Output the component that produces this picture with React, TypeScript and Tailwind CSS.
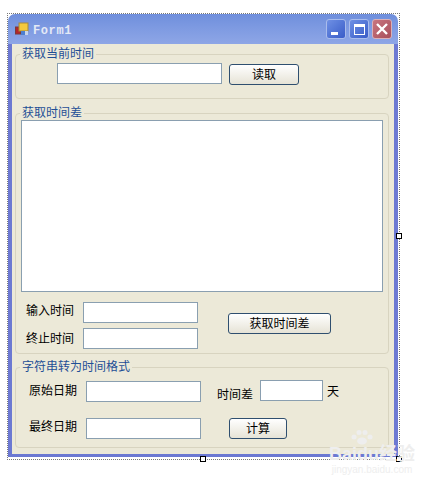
const font = { fontFamily: '"Noto Sans CJK SC", sans-serif' }

function TextBox({ className }: { className: string }) {
  return <div className={`h-[21px] border border-[#8a9fb0] bg-white ${className}`} />
}

function Btn({ label, className }: { label: string; className: string }) {
  return (
    <div className={`flex h-[21px] items-center justify-center rounded-[3px] border border-[#2f4f6f] bg-gradient-to-b from-white to-[#e6e3d6] pb-[2px] text-[12px] text-black ${className}`}>
      {label}
    </div>
  )
}

function Group({ title, className, children }: { title: string; className: string; children: React.ReactNode }) {
  return (
    <div className={`relative ml-[3px] mr-[5px] rounded-[4px] border border-[#d8d4c0] ${className}`}>
      <span className="absolute left-[4px] top-[-9px] bg-[#ece9d8] px-[2px] text-[12px] leading-[14px] text-[#1f4f96]">{title}</span>
      {children}
    </div>
  )
}

function Handle({ className }: { className: string }) {
  return <div className={`absolute h-[6px] w-[6px] border border-black bg-white ${className}`} />
}

export default function App() {
  return (
    <div className="relative h-[487px] w-[444px] overflow-hidden bg-white pl-[7px] pt-[13px]" style={font}>
      <div className="h-[447px] w-[393px] border border-dotted border-[#777]">
        <div className="flex h-[443px] w-[390px] flex-col">
          {/* title bar */}
          <div className="flex h-[30px] items-center rounded-t-[7px] bg-gradient-to-b from-[#6f8fdc] via-[#7f9be2] to-[#8ea6e6] pl-[7px] pr-[6px]">
            <svg width="15" height="15" viewBox="0 0 15 15" className="mt-[1px]">
              <rect x="0.5" y="5" width="5" height="7" fill="#b3262a" stroke="#7a3b3b" />
              <rect x="4" y="1" width="9" height="8" fill="#f4c93e" stroke="#a88a3a" />
              <rect x="6" y="9" width="4" height="4" fill="#4d7fd0" />
              <rect x="10" y="9" width="3" height="4" fill="#c9d4ea" />
            </svg>
            <span className="ml-[3px] mt-[4px] text-[12px] font-bold tracking-[0.6px] text-[#e4e9f6]" style={{ fontFamily: '"Liberation Mono", monospace' }}>Form1</span>
            <div className="ml-auto flex gap-[3px]">
              <div className="relative h-[20px] w-[20px] rounded-[3px] border border-[#a9bcec] bg-gradient-to-br from-[#6f90e4] to-[#3a5cc8]">
                <div className="absolute bottom-[3px] left-[4px] h-[3px] w-[7px] bg-white" />
              </div>
              <div className="flex h-[20px] w-[20px] items-center justify-center rounded-[3px] border border-[#a9bcec] bg-gradient-to-br from-[#6f90e4] to-[#3a5cc8]">
                <div className="h-[11px] w-[11px] border border-t-[3px] border-white" />
              </div>
              <div className="flex h-[20px] w-[20px] items-center justify-center rounded-[3px] border border-[#d9b0b8] bg-gradient-to-br from-[#c8757f] to-[#a8505c]">
                <svg width="12" height="12" viewBox="0 0 12 12">
                  <path d="M1 1L11 11M11 1L1 11" stroke="#fff" strokeWidth="2.4" />
                </svg>
              </div>
            </div>
          </div>

          {/* client area */}
          <div className="flex-1 border-x-4 border-b-[3px] border-[#6c79d2] bg-[#ece9d8] pt-[10px]">
            <Group title="获取当前时间" className="h-[45px]">
              <div className="flex items-start pl-[41px] pt-[8px]">
                <TextBox className="w-[165px]" />
                <Btn label="读取" className="ml-[7px] mt-[1px] w-[70px]" />
              </div>
            </Group>

            <Group title="获取时间差" className="mt-[14px] h-[241px]">
              <div className="mx-[5px] mt-[6px] h-[172px] border border-[#8a9fb0] bg-white" />
              <div className="mt-[10px] flex pl-[10px]">
                <div className="flex flex-col gap-[5px] text-[12px] text-black">
                  <div className="flex items-center">
                    <span className="w-[57px] pb-[5px] leading-[14px]">输入时间</span>
                    <TextBox className="w-[115px]" />
                  </div>
                  <div className="flex items-center">
                    <span className="w-[57px] pb-[2px] leading-[14px]">终止时间</span>
                    <TextBox className="w-[115px]" />
                  </div>
                </div>
                <Btn label="获取时间差" className="ml-[30px] mt-[11px] w-[103px]" />
              </div>
            </Group>

            <Group title="字符串转为时间格式" className="mt-[13px] h-[81px]">
              <div className="flex pl-[13px] pt-[12px] text-[12px] text-black">
                <div className="flex items-center">
                  <span className="w-[57px] pb-[4px] leading-[14px]">原始日期</span>
                  <TextBox className="w-[115px]" />
                </div>
                <span className="ml-[16px] mt-[5px]">时间差</span>
                <TextBox className="ml-[7px] w-[63px]" />
                <span className="ml-[4px] mt-[2px]">天</span>
              </div>
              <div className="mt-[14px] flex pl-[13px] text-[12px] text-black">
                <div className="flex items-center">
                  <span className="w-[57px] pb-[4px] leading-[14px]">最终日期</span>
                  <TextBox className="w-[115px]" />
                </div>
                <Btn label="计算" className="ml-[28px] mt-[1px] w-[58px]" />
              </div>
            </Group>
          </div>
        </div>
      </div>

      <Handle className="left-[396px] top-[233px]" />
      <Handle className="left-[200px] top-[456px]" />
      <Handle className="left-[396px] top-[456px]" />

      {/* watermark */}
      <div className="absolute left-[327px] top-[429px] flex w-[90px] flex-col items-center text-[#eeeeee]">
        <svg width="30" height="16" viewBox="0 0 30 16" className="mr-[20px]">
          <g fill="#eeeeee">
            <circle cx="7" cy="8" r="2.5" />
            <circle cx="12" cy="3.5" r="2.5" />
            <circle cx="18" cy="3.5" r="2.5" />
            <circle cx="23" cy="8" r="2.5" />
            <ellipse cx="15" cy="12" rx="5" ry="3.5" />
          </g>
        </svg>
        <span className="whitespace-nowrap text-[18px] font-bold leading-[18px]" style={{ fontFamily: '"Liberation Sans", "Noto Sans CJK SC", sans-serif' }}>Baidu经验</span>
        <span className="mt-[1px] whitespace-nowrap text-[10px] leading-[11px]" style={{ fontFamily: '"Liberation Sans", sans-serif' }}>jingyan.baidu.com</span>
      </div>
    </div>
  )
}
